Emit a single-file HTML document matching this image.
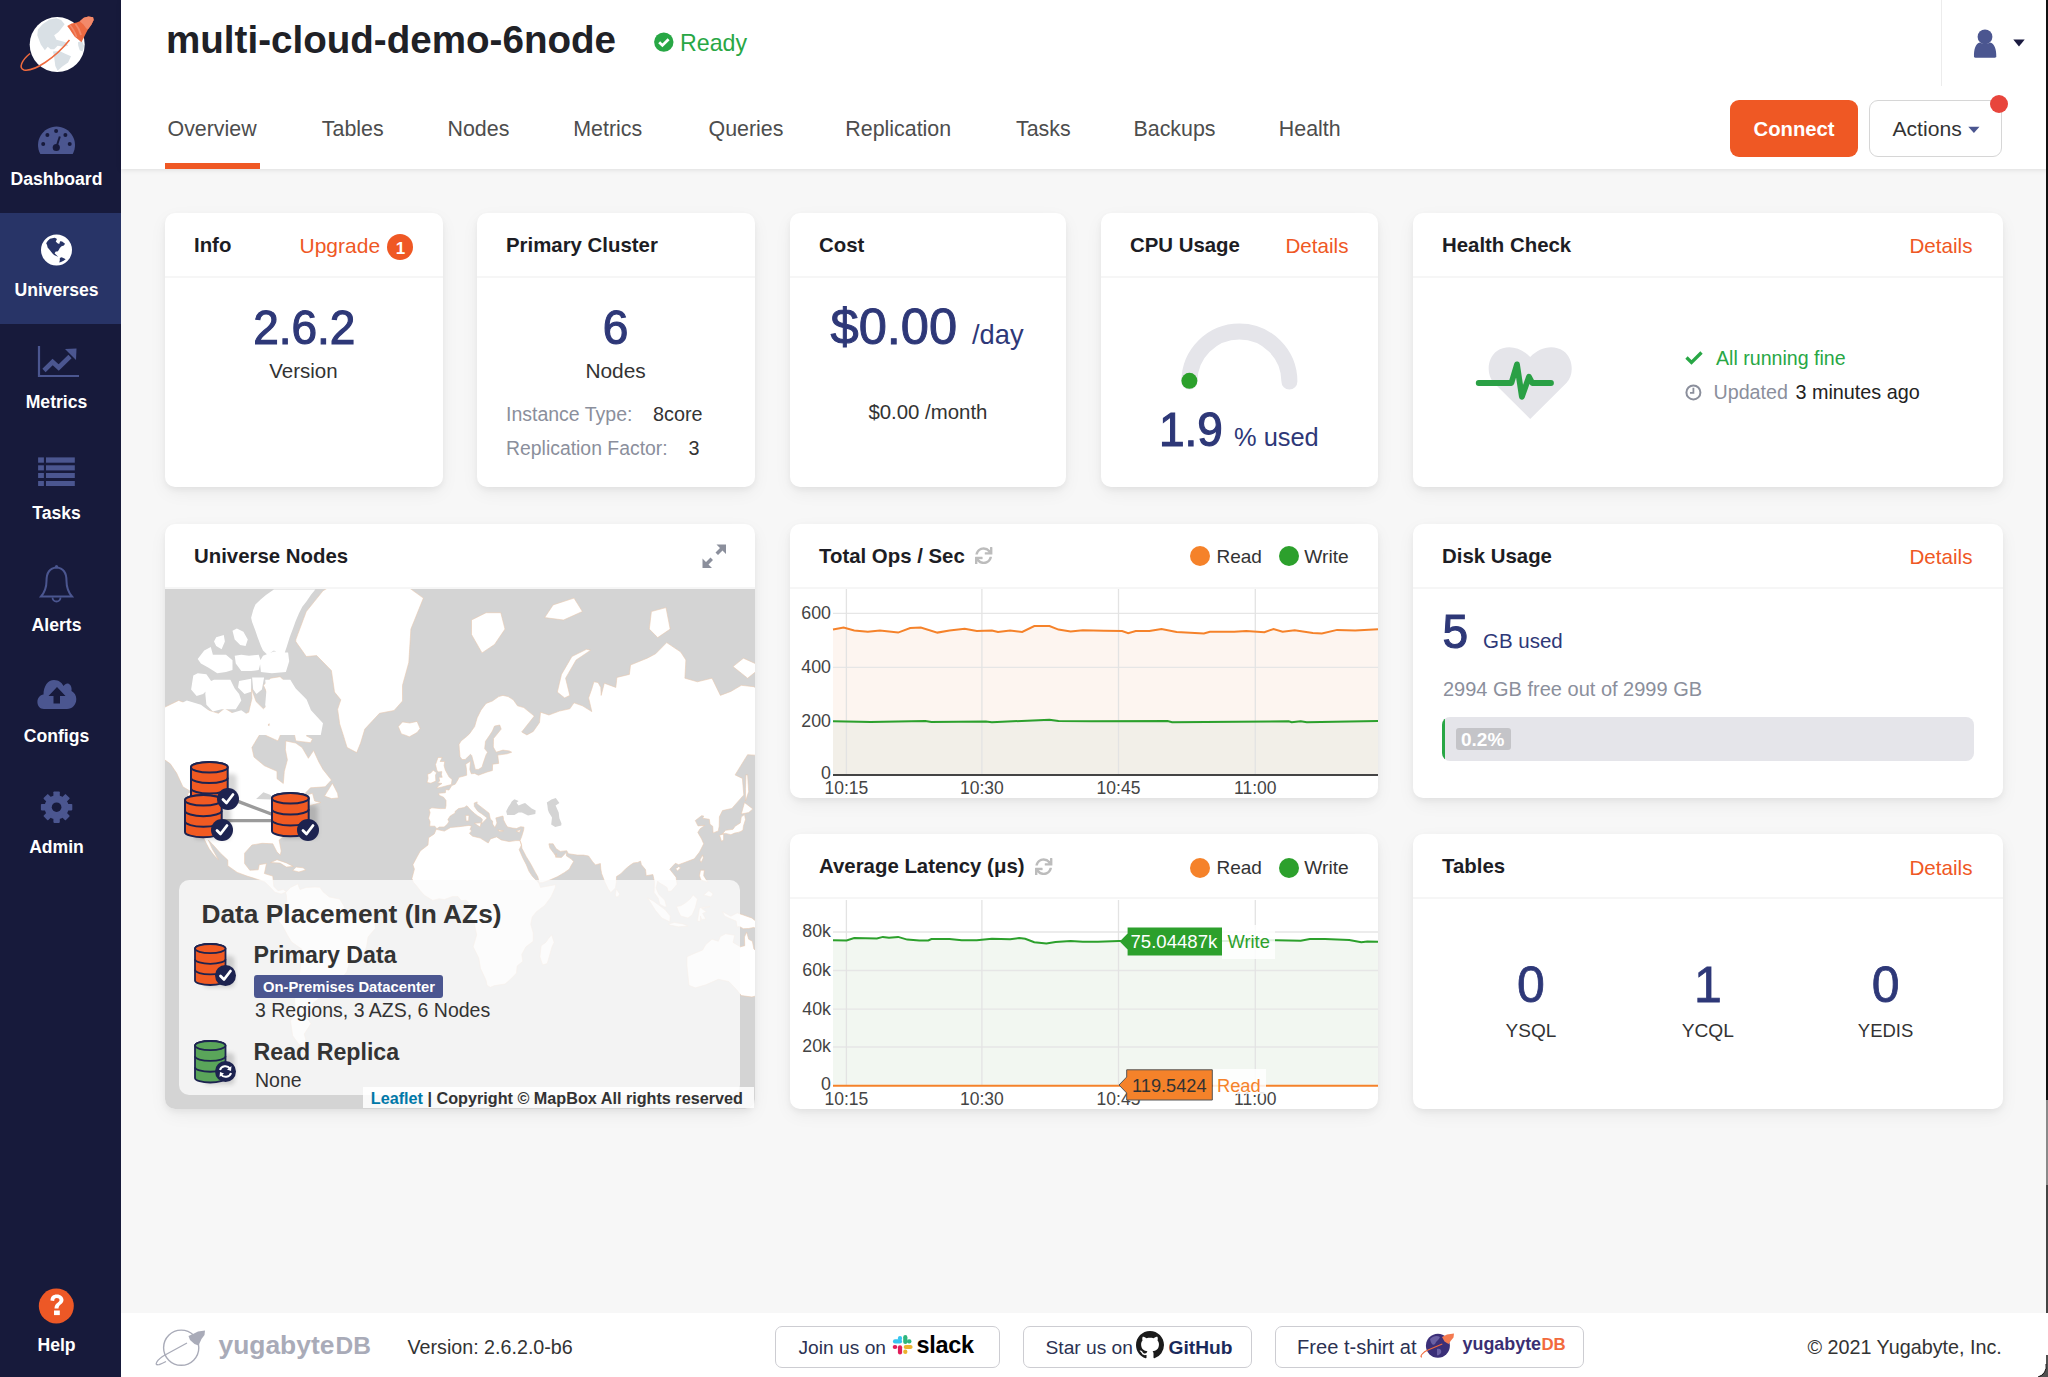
<!DOCTYPE html>
<html><head><meta charset="utf-8">
<style>
*{box-sizing:border-box;margin:0;padding:0}
html,body{width:2048px;height:1377px;overflow:hidden;background:#f7f7f7;font-family:"Liberation Sans",sans-serif;color:#333}
.abs{position:absolute}
.t{position:absolute;line-height:1;white-space:nowrap}
#side{position:absolute;left:0;top:0;width:121px;height:1377px;background:#171a3b}
.nav{position:absolute;left:0;width:121px;height:112px;text-align:center;color:#fff}
.nav.act{background:#283467}
.lbl{font-size:17.6px;line-height:17.6px;font-weight:bold;color:#fff;white-space:nowrap;text-align:center}
#hdr{position:absolute;left:121px;top:0;width:1927px;height:169px;background:#fff;box-shadow:0 1px 5px rgba(0,0,0,0.1)}
.tab{position:absolute;top:115px;font-size:21.4px;color:#4a4a4a;white-space:nowrap}
.card{position:absolute;background:#fff;border-radius:10px;box-shadow:0 3px 6px rgba(0,0,0,0.05),0 6px 18px rgba(0,0,0,0.05);overflow:hidden}
.card .hd{position:absolute;left:0;right:0;top:0;height:65px;border-bottom:2px solid #f6f6f6}
.card .tt{position:absolute;left:29px;top:21px;font-size:20.4px;font-weight:bold;color:#1d1d24;white-space:nowrap}
.card .lk{position:absolute;top:22px;font-size:21px;color:#ef5824;white-space:nowrap}
.big{color:#2e3878}
#foot{position:absolute;left:121px;top:1313px;width:1927px;height:64px;background:#fff}
.fbtn{position:absolute;top:13px;height:41px;border:1.5px solid #d3d3d3;border-radius:6px;background:#fff;font-size:20px;color:#2e3454;white-space:nowrap}
</style></head><body>
<div id="side">
<svg class="abs" style="left:0;top:0" width="121" height="1377" viewBox="0 0 121 1377">
 <!-- logo -->
 <circle cx="57.2" cy="44.6" r="27.5" fill="#fff"/>
 <path d="M37.31 35.21 L37.89 29.40 L42.54 24.17 L49.51 19.53 L56.48 18.36 L61.13 20.11 L64.62 24.17 L60.55 29.40 L58.23 32.31 L54.16 35.21 L56.48 39.86 L61.13 41.03 L65.78 42.19 L68.11 45.67 L63.46 46.84 L57.65 45.67 L54.16 49.16 L50.67 49.16 L47.77 46.84 L44.86 50.32 L40.80 44.51Z M53.00 51.48 L59.39 50.90 L65.20 53.81 L71.01 56.13 L68.11 62.52 L62.30 66.59 L57.65 70.66 L55.32 66.01 L54.16 57.30Z M77.98 42.19 L82.05 41.03 L84.08 45.67 L82.63 51.48 L79.73 50.32 L78.27 45.67Z" fill="#d9e0e5"/>
 <path d="M30 53.5 C22 60 18 68 24 70 C34 72 55 58 69.5 40" fill="none" stroke="#ee6a3e" stroke-width="1.5"/>
 <path d="M67.23 25.92 L71.59 23.59 L76.82 22.43 L79.73 21.27 L83.79 17.78 L88.44 16.62 L93.09 17.20 L93.67 20.11 L91.35 24.76 L87.86 29.40 L85.54 34.05 L83.79 37.54 L81.47 42.19 L78.56 39.86 L74.50 36.38 L71.59 32.31 L69.85 29.40Z" fill="#ec6a42"/>
 <path d="M79.73 21.27 L83.79 17.78 L88.44 16.62 L93.09 17.20 L93.67 20.11 L91.35 24.76 L87.86 29.40 L86.12 28.24 L83.21 24.17Z" fill="#f2896a"/>
 <path d="M75.5 24 C78 27 80 31 81 35" stroke="#f2896a" stroke-width="1.8" fill="none"/>
 <path d="M70 25 C73 29 75.5 33 76.5 37" stroke="#f2896a" stroke-width="1.6" fill="none"/>
 <!-- dashboard gauge -->
 <path d="M40.3 154 A18.5 18.5 0 1 1 72.7 154 Z" fill="#4b5690"/>
 <g fill="#171a3b"><circle cx="47.4" cy="134.9" r="2"/><circle cx="56.1" cy="131" r="2"/><circle cx="65.4" cy="134.9" r="2"/><circle cx="43.2" cy="143.9" r="2"/><circle cx="69.7" cy="143.9" r="2"/><circle cx="56.3" cy="147.5" r="3.6"/></g>
 <path d="M56.3 147.5 L59.8 136.5" stroke="#171a3b" stroke-width="2"/>
 <!-- universes globe -->
 <rect x="0" y="213" width="121" height="111" fill="#283467"/>
 <circle cx="56.5" cy="250" r="15.5" fill="#fff"/>
 <path d="M46.17 243.36 L47.62 241.04 L49.94 238.71 L52.26 238.13 L54.59 237.84 L56.33 238.42 L56.91 239.29 L55.75 241.62 L57.49 243.36 L59.24 243.94 L60.11 241.33 L62.14 241.62 L65.04 243.65 L63.88 245.39 L61.56 246.26 L59.82 248.01 L58.65 250.33 L57.49 251.49 L55.75 251.49 L54.59 253.24 L56.33 254.98 L58.36 257.01 L56.91 256.29 L54.01 254.98 L52.26 253.24 L49.94 250.33 L47.62 247.43 L47.04 245.10Z M59.82 257.88 L61.56 257.30 L63.88 258.17 L65.63 259.33 L63.59 260.79 L60.98 261.95 L59.24 262.53 L59.82 260.21Z" fill="#283467"/>
 <!-- metrics -->
 <path d="M39 346 V376 H79" fill="none" stroke="#4b5690" stroke-width="2.2"/>
 <path d="M44 370.5 L52.6 362 L58.7 367.5 L70 356.5" fill="none" stroke="#4b5690" stroke-width="4.6"/>
 <path d="M65 349 L76.5 348.5 L76 360 Z" fill="#4b5690"/>
 <!-- tasks -->
 <g fill="#4b5690">
 <rect x="38.1" y="457.4" width="5.8" height="5.3"/><rect x="46" y="457.4" width="28.8" height="5.3"/>
 <rect x="38.1" y="465.3" width="5.8" height="5.1"/><rect x="46" y="465.3" width="28.8" height="5.1"/>
 <rect x="38.1" y="473" width="5.8" height="5"/><rect x="46" y="473" width="28.8" height="5"/>
 <rect x="38.1" y="481" width="5.8" height="5"/><rect x="46" y="481" width="28.8" height="5"/>
 </g>
 <!-- alerts bell -->
 <path d="M56.5 567.5 C49 568 46.5 574 46.5 581 C46.5 588 44 593 41 596.5 L72 596.5 C69 593 66.5 588 66.5 581 C66.5 574 64 568 56.5 567.5Z" fill="none" stroke="#4b5690" stroke-width="2"/>
 <circle cx="56.5" cy="566.5" r="1.6" fill="#4b5690"/>
 <path d="M52.5 597.5 A4 4 0 0 0 60.5 597.5" fill="none" stroke="#4b5690" stroke-width="1.8"/>
 <!-- configs cloud -->
 <path d="M44 709 C39.5 709 37.4 705.5 37.4 702 C37.4 698 40 695 43.5 694.5 C43.5 686 48 680 54 680 C59 680 62 683 63.5 686 C65 684 67 683 69 684 C71 685 72 688 71.5 691 C74.5 692.5 76.3 695.5 76.3 699 C76.3 705 72 709 67 709 Z" fill="#4b5690"/>
 <path d="M57 687 L48.5 696 L53.5 696 L53.5 703.5 L60 703.5 L60 696 L65.5 696 Z" fill="#171a3b"/>
 <!-- admin gear -->
 <g transform="translate(56.6 807.2)" fill="#4b5690">
  <circle r="12"/>
  <g id="tooth"><rect x="-3.2" y="-15.7" width="6.4" height="6" rx="0.8"/></g>
  <use href="#tooth" transform="rotate(45)"/><use href="#tooth" transform="rotate(90)"/><use href="#tooth" transform="rotate(135)"/>
  <use href="#tooth" transform="rotate(180)"/><use href="#tooth" transform="rotate(225)"/><use href="#tooth" transform="rotate(270)"/><use href="#tooth" transform="rotate(315)"/>
  <circle r="4.8" fill="#171a3b"/>
 </g>
 <!-- help -->
 <circle cx="56.3" cy="1306" r="17.5" fill="#ed5826"/>
 <path d="M50.5 1300.5 C50.5 1296.5 53 1294.5 56.8 1294.5 C61 1294.5 63.5 1297 63.5 1300 C63.5 1304 58.5 1304.5 58.5 1308.5 L54.5 1308.5 C54.5 1303 59.5 1302.5 59.5 1300.2 C59.5 1298.8 58.5 1298 56.8 1298 C55 1298 54.2 1299.2 54.2 1301 Z" fill="#fff"/>
 <rect x="54" y="1310.5" width="5.8" height="4.6" fill="#fff"/>
</svg>
<div class="abs lbl" style="left:0;width:113px;top:171px">Dashboard</div>
<div class="abs lbl" style="left:0;width:113px;top:282px">Universes</div>
<div class="abs lbl" style="left:0;width:113px;top:394px">Metrics</div>
<div class="abs lbl" style="left:0;width:113px;top:505px">Tasks</div>
<div class="abs lbl" style="left:0;width:113px;top:617px">Alerts</div>
<div class="abs lbl" style="left:0;width:113px;top:728px">Configs</div>
<div class="abs lbl" style="left:0;width:113px;top:839px">Admin</div>
<div class="abs lbl" style="left:0;width:113px;top:1337px">Help</div>
</div>
<div id="hdr">
</div>
<div class="t" style="left:166px;top:21px;font-size:38.6px;font-weight:bold;color:#202126;">multi-cloud-demo-6node</div>
<svg class="abs" style="left:654px;top:32px" width="20" height="20" viewBox="0 0 20 20"><circle cx="9.8" cy="10.1" r="9.7" fill="#28a745"/><path d="M5.2 10.3 L8.4 13.4 L14.6 7.2" fill="none" stroke="#fff" stroke-width="2.8"/></svg>
<div class="t" style="left:680px;top:32px;font-size:23.2px;color:#28a745;">Ready</div>
<div class="t" style="left:167.5px;top:119px;font-size:21.4px;color:#4d4d4d;">Overview</div>
<div class="t" style="left:321.8px;top:119px;font-size:21.4px;color:#4d4d4d;">Tables</div>
<div class="t" style="left:447.5px;top:119px;font-size:21.4px;color:#4d4d4d;">Nodes</div>
<div class="t" style="left:573.3px;top:119px;font-size:21.4px;color:#4d4d4d;">Metrics</div>
<div class="t" style="left:708.5px;top:119px;font-size:21.4px;color:#4d4d4d;">Queries</div>
<div class="t" style="left:845.3px;top:119px;font-size:21.4px;color:#4d4d4d;">Replication</div>
<div class="t" style="left:1016px;top:119px;font-size:21.4px;color:#4d4d4d;">Tasks</div>
<div class="t" style="left:1133.5px;top:119px;font-size:21.4px;color:#4d4d4d;">Backups</div>
<div class="t" style="left:1278.8px;top:119px;font-size:21.4px;color:#4d4d4d;">Health</div>
<div class="abs" style="left:165px;top:163px;width:95px;height:6px;background:#ef5824"></div>
<div class="abs" style="left:1730px;top:100px;width:128px;height:57px;background:#ef5824;border-radius:9px"></div>
<div class="t" style="left:1753.5px;top:119px;font-size:20.3px;font-weight:bold;color:#fff;">Connect</div>
<div class="abs" style="left:1869px;top:100px;width:133px;height:57px;background:#fff;border:1.5px solid #d6d6d6;border-radius:9px"></div>
<div class="t" style="left:1892.5px;top:118px;font-size:21.1px;color:#333;">Actions</div>
<svg class="abs" style="left:1968px;top:126px" width="12" height="8" viewBox="0 0 12 8"><path d="M0.3 0.7 L11.5 0.7 L5.9 7 Z" fill="#4b5690"/></svg>
<div class="abs" style="left:1989.6px;top:95.2px;width:18px;height:18px;border-radius:50%;background:#e8453c"></div>
<div class="abs" style="left:1941px;top:0;width:1px;height:86px;background:#ececec"></div>
<svg class="abs" style="left:1970px;top:26px" width="60" height="34" viewBox="0 0 60 34"><circle cx="15" cy="10.8" r="7.4" fill="#4b5690"/><path d="M4 31 C3.8 23 5.5 17.5 10 16.5 C12 18.3 18 18.3 20 16.5 C24.5 17.5 26.5 23 26.3 31 C26 31.5 25 31.8 24 31.8 L6.5 31.8 C5 31.8 4.2 31.5 4 31Z" fill="#4b5690"/><path d="M43.3 13.5 L54.7 13.5 L49 20.4 Z" fill="#1b1b40"/></svg>
<div class="abs" style="left:2046px;top:0;width:2px;height:1100px;background:#111"></div><div class="abs" style="left:2046px;top:1100px;width:2px;height:85px;background:#8a8a8a"></div><div class="abs" style="left:2046px;top:1185px;width:2px;height:192px;background:#444"></div>
<div id="foot">
</div>
<!-- cards -->
<div class="card" style="left:165px;top:213px;width:278px;height:274px"><div class="hd"><div class="tt">Info</div></div></div>
<div class="card" style="left:477px;top:213px;width:278px;height:274px"><div class="hd"><div class="tt">Primary Cluster</div></div></div>
<div class="card" style="left:790px;top:213px;width:276px;height:274px"><div class="hd"><div class="tt">Cost</div></div></div>
<div class="card" style="left:1101px;top:213px;width:277px;height:274px"><div class="hd"><div class="tt">CPU Usage</div></div></div>
<div class="card" style="left:1413px;top:213px;width:590px;height:274px"><div class="hd"><div class="tt">Health Check</div></div></div>
<div class="card" style="left:165px;top:524px;width:590px;height:585px"><div class="hd"><div class="tt">Universe Nodes</div></div><svg class="abs" style="left:0;top:65px" width="590" height="520" viewBox="165 589 590 520"><rect x="165" y="589" width="590" height="520" fill="#d4d4d4"/><path d="M97.1 726.1 L101.3 708.2 L120.5 693.4 L130.6 696.6 L153.6 704.0 L164.0 707.6 L178.7 700.4 L189.1 704.6 L203.8 708.8 L218.4 713.3 L224.7 708.2 L233.1 713.3 L243.5 714.4 L248.7 712.2 L251.9 698.5 L251.5 688.8 L256.1 701.6 L263.4 708.8 L269.7 702.8 L272.8 705.8 L278.4 711.1 L277.0 721.4 L269.7 723.0 L267.6 730.0 L259.2 735.3 L251.9 747.5 L254.0 757.1 L264.4 765.7 L277.0 771.3 L277.0 778.7 L283.3 783.5 L284.3 771.3 L287.4 759.9 L285.4 749.7 L285.8 740.9 L295.8 743.1 L302.1 747.5 L308.4 758.3 L313.6 750.5 L318.8 761.9 L323.0 769.4 L331.4 780.1 L325.1 786.8 L310.5 787.8 L302.1 796.4 L312.5 793.3 L314.6 801.0 L320.9 802.5 L310.5 805.4 L302.1 808.4 L302.1 813.5 L293.7 816.8 L289.5 826.2 L290.6 830.9 L279.1 840.1 L281.2 850.9 L280.3 855.1 L277.0 852.1 L272.8 843.8 L262.3 843.3 L251.9 845.0 L244.6 853.2 L244.6 863.5 L249.8 870.2 L258.2 869.8 L259.2 864.7 L266.5 863.5 L264.4 873.5 L272.8 876.1 L273.8 886.4 L278.0 890.7 L283.3 889.6 L286.4 891.8 L281.2 893.9 L274.9 892.2 L268.6 885.4 L264.4 881.7 L256.1 878.9 L247.7 876.3 L237.2 872.4 L227.8 865.8 L227.8 860.1 L220.5 853.2 L213.2 845.0 L208.4 840.1 L212.1 848.6 L218.4 859.7 L214.2 855.6 L209.0 848.6 L205.9 842.6 L203.4 837.2 L196.2 832.6 L192.3 824.9 L189.1 816.8 L188.1 809.8 L189.1 799.5 L187.7 793.6 L191.2 791.7 L182.9 786.8 L176.6 773.1 L170.3 763.8 L161.9 757.9 L155.7 753.0 L143.1 749.7 L134.8 754.3 L126.4 761.9 L118.0 765.7 L105.5 772.4 L118.0 757.9 L109.6 752.2 L103.4 748.4 L104.4 737.7 L111.7 731.5 L101.3 731.0Z M295.8 639.6 L306.3 611.5 L323.0 590.8 L364.8 565.8 L402.5 583.0 L423.4 598.1 L410.9 629.1 L408.8 662.5 L402.5 685.3 L402.5 701.0 L394.1 710.5 L379.5 713.3 L364.8 729.1 L360.6 743.1 L356.7 752.6 L347.1 747.5 L342.9 733.9 L339.7 724.0 L337.6 709.3 L340.8 699.8 L334.5 692.1 L331.4 670.6 L316.7 655.6 L306.3 656.5 L295.8 641.6Z M436.8 828.8 L434.9 826.2 L429.7 826.2 L430.1 821.7 L428.6 818.2 L430.1 812.6 L429.0 809.5 L431.8 807.8 L440.1 808.6 L445.4 808.6 L446.0 805.4 L446.0 800.4 L443.7 797.3 L439.1 795.2 L438.7 793.3 L445.4 792.7 L445.8 789.4 L448.9 790.1 L451.8 785.5 L455.2 784.2 L457.9 779.8 L459.0 777.3 L463.1 776.3 L466.7 775.2 L466.5 769.4 L465.7 764.2 L470.5 761.1 L469.8 769.4 L471.3 773.8 L474.6 773.4 L478.4 775.2 L487.2 772.0 L492.4 770.5 L492.6 764.2 L498.7 763.4 L497.7 755.1 L507.1 753.8 L511.7 752.2 L509.2 750.9 L502.9 750.1 L496.2 752.2 L493.3 747.1 L493.5 738.6 L501.2 729.1 L499.7 725.0 L494.5 726.1 L492.4 731.0 L489.3 735.8 L485.5 741.3 L484.7 748.8 L487.6 752.2 L486.1 754.7 L483.0 763.8 L482.0 767.2 L478.4 769.4 L475.3 769.4 L474.6 766.5 L473.2 761.1 L471.7 755.5 L470.5 754.3 L468.4 756.3 L465.2 759.5 L462.1 759.5 L460.0 756.7 L459.4 750.1 L459.0 744.5 L461.1 740.9 L466.3 736.8 L469.4 733.9 L474.6 726.6 L477.2 717.7 L481.1 709.9 L486.1 703.4 L492.4 701.0 L498.7 696.6 L502.9 695.4 L508.1 696.6 L513.3 699.8 L517.5 705.8 L523.8 707.6 L534.3 716.1 L528.0 724.0 L521.7 732.0 L526.9 734.9 L533.2 731.5 L539.5 722.5 L540.5 712.2 L548.9 715.0 L559.4 711.1 L569.8 708.8 L574.0 702.8 L582.4 705.8 L591.8 711.6 L588.6 697.9 L591.8 688.8 L593.9 681.8 L598.1 682.5 L600.8 687.4 L601.2 695.4 L604.3 683.2 L615.8 687.4 L616.9 677.4 L629.4 674.4 L630.5 665.0 L647.2 658.2 L655.6 653.8 L666.7 642.6 L680.7 652.0 L685.9 660.0 L684.9 678.2 L697.4 681.8 L712.0 678.2 L720.4 695.4 L730.9 691.4 L741.3 685.3 L753.9 686.7 L762.2 692.1 L783.2 698.5 L825.0 713.3 L825.0 743.1 L793.6 751.8 L789.4 767.6 L774.8 785.2 L773.8 763.8 L766.4 755.9 L747.6 754.7 L735.1 774.9 L742.4 778.4 L743.8 794.9 L731.9 808.4 L722.5 810.6 L719.4 816.8 L719.2 826.2 L718.3 830.9 L713.1 832.9 L712.7 826.2 L710.0 824.3 L709.3 819.3 L702.6 818.2 L703.7 816.0 L701.6 815.7 L695.3 820.6 L698.0 825.9 L704.7 825.4 L700.1 828.8 L697.8 832.4 L701.6 838.9 L703.7 843.8 L699.5 852.1 L694.3 858.8 L685.9 862.0 L678.6 864.7 L675.4 863.3 L671.3 867.6 L669.8 869.3 L676.1 877.2 L677.1 884.3 L671.3 891.1 L668.1 891.5 L667.1 887.5 L663.9 885.4 L659.3 882.8 L657.7 881.1 L656.0 887.9 L658.7 894.3 L664.8 900.2 L666.5 906.7 L664.8 906.9 L659.8 904.2 L658.3 898.3 L654.1 892.4 L654.5 882.2 L652.9 874.6 L646.2 875.7 L645.5 869.6 L641.4 864.7 L640.5 861.1 L637.8 862.4 L633.6 862.9 L630.3 865.1 L626.3 868.2 L620.6 873.9 L616.5 876.6 L616.3 882.2 L615.4 887.9 L610.8 892.6 L608.1 888.8 L605.0 882.4 L601.6 873.5 L600.8 869.1 L600.4 863.5 L595.5 864.9 L592.6 861.7 L588.6 856.0 L583.4 855.1 L577.3 855.1 L568.4 853.7 L566.7 850.7 L560.4 851.4 L556.2 848.8 L553.1 843.8 L548.9 843.8 L549.9 848.1 L553.5 852.8 L556.2 856.7 L556.4 853.5 L555.6 857.2 L561.5 857.4 L566.3 852.3 L566.5 856.0 L571.1 858.8 L573.6 861.5 L570.9 866.0 L569.4 869.1 L564.6 872.4 L557.7 876.6 L549.9 880.0 L542.6 882.6 L539.3 882.8 L537.8 876.8 L535.3 872.4 L530.5 863.5 L526.3 856.7 L521.9 848.3 L521.5 845.0 L520.0 840.6 L521.7 836.4 L523.6 830.1 L524.0 827.2 L520.7 826.7 L516.5 828.5 L512.3 828.0 L507.5 827.0 L505.6 824.1 L503.5 819.8 L503.3 817.3 L502.9 816.0 L498.1 817.3 L495.8 817.9 L497.0 823.0 L494.9 827.5 L492.6 824.1 L492.6 821.1 L490.3 819.0 L489.1 813.2 L483.0 808.4 L476.9 803.7 L477.2 801.9 L474.2 803.1 L474.4 806.6 L477.8 811.2 L482.0 814.0 L487.2 817.9 L483.2 822.2 L481.3 823.8 L482.4 819.5 L481.1 817.9 L477.8 816.0 L474.6 813.5 L470.5 809.8 L466.9 805.7 L464.2 807.5 L458.5 808.6 L455.0 811.5 L455.2 812.9 L450.2 816.0 L447.9 819.5 L448.9 821.7 L447.0 824.6 L444.1 827.0 L439.3 827.0Z M286.4 891.8 L290.6 887.5 L297.9 883.9 L298.9 886.9 L300.0 889.6 L306.3 887.5 L314.6 887.1 L319.9 887.3 L323.0 891.8 L329.3 897.0 L339.7 899.1 L343.9 905.8 L345.0 909.6 L350.2 911.3 L356.5 914.8 L365.9 915.9 L374.9 921.1 L375.3 928.5 L368.0 937.0 L366.5 946.8 L363.8 954.5 L360.6 959.1 L355.4 959.7 L349.1 963.6 L346.8 971.8 L341.8 977.9 L336.6 985.3 L331.4 987.8 L328.2 991.7 L328.2 997.0 L318.8 998.3 L312.5 1003.8 L313.6 1008.0 L307.3 1018.2 L310.9 1023.7 L304.2 1034.0 L305.6 1039.1 L306.3 1047.9 L298.9 1044.3 L292.7 1035.7 L290.6 1021.3 L294.8 1009.4 L294.8 993.0 L298.9 977.9 L301.0 963.6 L301.7 949.0 L291.6 942.0 L287.4 934.9 L282.2 925.3 L278.7 921.1 L280.1 915.9 L280.1 910.6 L284.3 906.5 L286.8 901.2 L286.4 894.9 L285.4 892.2Z M436.2 829.3 L444.3 831.1 L450.6 827.5 L459.0 826.7 L469.0 825.4 L471.5 826.2 L470.0 829.3 L471.5 830.9 L469.4 833.4 L472.6 836.2 L480.3 838.1 L488.2 843.0 L490.5 838.9 L496.6 836.9 L501.2 839.9 L509.2 841.6 L515.9 840.6 L520.0 840.6 L521.5 845.0 L519.2 849.7 L522.8 857.9 L526.3 864.7 L529.0 871.3 L532.2 876.1 L538.9 883.2 L540.5 887.5 L555.6 884.7 L555.2 887.7 L551.0 897.0 L544.7 905.4 L536.4 911.7 L532.2 916.9 L530.7 924.3 L533.2 932.8 L533.2 941.3 L525.9 946.8 L521.7 954.5 L522.8 961.3 L517.1 966.0 L516.5 973.0 L511.2 978.6 L505.0 984.0 L494.5 985.6 L490.3 987.3 L487.0 985.3 L486.1 980.3 L480.5 968.3 L478.8 957.9 L473.2 946.8 L476.7 934.9 L474.2 922.2 L467.3 911.7 L468.4 902.3 L466.3 900.2 L461.1 900.6 L457.9 896.4 L452.7 896.4 L444.3 899.5 L439.1 898.7 L432.8 900.4 L424.4 895.3 L420.3 890.7 L417.1 886.4 L413.4 882.2 L411.9 878.5 L414.4 869.1 L412.9 864.7 L417.1 856.7 L420.3 850.9 L428.0 845.0 L428.6 837.7 L434.3 833.9Z M436.6 788.2 L441.2 787.2 L451.4 784.5 L452.1 779.4 L449.1 777.0 L445.4 770.2 L444.1 765.7 L444.7 761.5 L440.1 761.5 L442.2 757.5 L438.0 757.5 L435.5 764.6 L436.8 770.2 L438.3 772.0 L441.8 771.6 L441.4 774.5 L442.2 777.3 L438.9 777.3 L439.7 781.1 L437.6 782.8 L442.0 783.5 L438.9 785.5Z M435.9 781.1 L435.5 775.2 L436.6 772.7 L433.2 770.2 L430.7 773.1 L427.6 774.2 L428.0 778.4 L427.0 782.5 L430.9 783.2Z M401.4 733.9 L398.3 726.6 L402.5 721.9 L409.8 723.0 L417.1 721.4 L420.1 728.6 L417.1 732.5 L409.4 736.8 L404.6 734.9Z M471.5 634.5 L482.0 652.9 L494.5 644.5 L505.0 629.1 L500.8 612.7 L486.1 612.7 L471.5 620.0Z M557.3 692.1 L564.6 697.9 L569.8 695.4 L565.6 678.2 L576.1 660.0 L590.7 650.2 L586.5 649.3 L571.9 656.5 L561.5 674.4 L559.4 683.2Z M544.7 617.6 L563.5 620.0 L582.4 611.5 L574.0 598.1 L553.1 604.9Z M649.3 629.1 L657.7 637.6 L670.2 629.1 L666.0 607.6 L651.4 611.5Z M733.0 666.6 L747.6 678.2 L762.2 666.6 L743.4 658.2Z M551.6 934.9 L554.1 942.4 L552.0 946.8 L547.2 963.6 L542.6 964.8 L539.9 956.8 L541.2 945.7 L545.8 942.4 L548.9 938.1Z M615.4 894.9 L616.3 889.0 L619.6 893.9 L618.3 896.6 L616.0 897.0Z M722.3 833.9 L725.6 830.3 L733.0 829.3 L735.1 826.2 L740.3 823.0 L741.3 816.8 L744.5 814.6 L745.5 819.5 L743.4 826.2 L743.0 830.1 L740.9 831.4 L738.2 832.4 L734.6 833.1 L730.9 834.7 L725.6 833.4Z M741.3 814.0 L744.5 802.5 L752.8 808.9 L748.7 812.6Z M719.6 835.2 L723.6 833.9 L723.6 840.1 L721.5 841.3Z M745.5 801.0 L748.7 791.7 L747.6 774.9 L745.9 774.9 L745.5 788.5Z M699.9 860.1 L702.6 854.9 L703.3 857.9 L701.2 862.4Z M675.7 868.7 L678.6 866.7 L680.7 867.8 L677.5 870.9Z M699.5 875.7 L700.5 870.2 L704.3 870.2 L703.7 875.7 L707.9 882.2 L700.8 880.0Z M703.7 894.9 L708.9 890.7 L713.1 893.9 L711.0 897.0Z M647.6 897.9 L653.5 901.2 L665.0 909.6 L670.2 915.9 L669.8 921.8 L661.9 918.0 L655.6 910.6 L652.4 905.4Z M668.5 923.9 L674.4 922.6 L682.8 923.9 L688.0 926.0 L678.6 926.8 L670.2 925.1Z M676.5 906.5 L678.6 911.7 L680.7 915.9 L688.0 918.0 L692.2 914.8 L695.3 907.5 L697.4 899.1 L693.2 894.9 L690.1 899.1 L684.9 903.3 L680.7 905.8Z M697.4 921.1 L699.5 907.9 L710.0 906.5 L701.6 908.6 L706.4 911.7 L702.6 913.4 L705.8 919.0 L701.6 919.4 L700.5 915.9 L700.3 921.3Z M722.5 911.7 L730.9 916.3 L737.2 912.9 L743.4 915.0 L751.8 918.0 L757.0 922.2 L756.0 926.4 L762.2 931.7 L753.9 927.4 L748.7 928.5 L743.4 928.7 L739.2 926.4 L737.2 927.0 L736.1 921.1 L728.8 918.0 L724.6 915.9Z M687.0 956.8 L687.0 966.0 L689.0 985.3 L695.3 987.8 L705.8 984.8 L718.3 979.3 L728.8 981.5 L736.1 989.1 L741.3 995.6 L751.8 997.0 L762.2 994.3 L769.6 970.6 L768.5 963.6 L760.2 954.5 L753.9 949.0 L752.4 941.3 L748.7 939.2 L746.6 932.1 L744.5 937.0 L744.7 945.7 L740.3 946.8 L733.0 942.4 L734.6 935.3 L725.6 933.8 L720.4 936.6 L718.3 941.3 L712.0 939.2 L705.8 944.6 L702.6 950.1 L693.2 953.9Z M270.7 862.6 L277.0 859.7 L286.4 862.9 L293.3 866.4 L286.4 867.1 L280.1 863.1Z M292.7 870.4 L296.2 867.1 L303.1 867.8 L305.6 870.0 L298.9 872.0Z M324.5 796.1 L332.4 783.2 L337.6 793.3 L338.3 797.9 L331.4 798.6Z M474.4 823.3 L481.1 822.8 L480.1 827.0Z M465.7 815.4 L469.0 815.4 L468.6 820.9 L466.1 820.9Z M497.7 829.8 L503.5 830.9 L499.7 831.6Z M516.1 831.1 L520.9 829.6 L519.4 832.4Z M319.0 719.3 L310.5 712.2 L305.2 700.4 L297.9 694.1 L288.5 684.6 L280.1 676.7 L270.7 678.2 L263.4 685.3 L269.7 698.5 L278.0 702.8 L274.9 710.5 L280.1 716.1 L285.4 729.1 L293.7 731.0 L295.8 740.9 L310.5 742.7 L312.5 739.1 L306.3 735.8 L313.6 731.0Z M281.2 733.0 L268.6 724.0 L265.5 735.3 L278.0 740.9Z" fill="#fff" stroke="#e9c9b0" stroke-width="0.6" fill-rule="nonzero"/><path d="M260.9 599.2 L266.3 594.8 L273.9 589.4 L285.9 589.4 L300.1 589.4 L315.3 589.4 L311.0 594.8 L306.6 601.3 L302.3 606.8 L299.0 613.3 L295.7 620.9 L293.0 628.6 L289.7 637.3 L287.0 646.0 L284.8 652.5 L280.5 653.6 L273.9 650.4 L267.4 654.7 L263.0 650.4 L260.9 646.0 L257.6 637.3 L255.4 630.8 L252.1 622.0 L251.1 617.7 L253.2 610.1 L255.4 604.6Z M232.5 630.8 L236.9 628.6 L243.4 631.8 L247.8 639.5 L245.6 646.0 L240.2 644.9 L234.7 639.5Z M216.2 637.3 L223.8 635.1 L224.9 641.6 L221.6 649.3 L216.2 646.0 L214.0 641.6Z M197.7 659.1 L204.2 650.4 L210.8 647.1 L212.9 654.7 L221.6 654.7 L226.0 654.7 L232.5 660.2 L232.5 670.0 L226.0 672.1 L217.3 673.2 L208.6 667.8 L200.9 663.4Z M234.7 655.8 L241.3 654.7 L248.9 655.8 L258.7 654.7 L260.9 661.3 L258.7 670.0 L251.1 671.1 L241.3 671.1 L235.8 663.4Z M263.0 655.8 L273.9 651.4 L288.1 652.5 L289.2 661.3 L285.9 672.1 L271.8 673.2 L260.9 672.1 L259.8 661.3Z M191.1 689.6 L193.3 675.4 L197.7 673.2 L206.4 674.3 L211.8 681.9 L208.6 688.5 L203.1 693.9 L196.6 696.1Z M206.4 683.0 L214.0 679.8 L230.4 679.8 L234.7 688.5 L239.1 693.9 L241.3 700.5 L235.8 709.2 L221.6 709.2 L212.9 711.4 L206.4 704.8 L205.3 693.9Z M239.1 680.9 L251.1 678.7 L251.1 691.8 L244.5 693.9 L238.0 687.4Z M252.1 677.6 L264.1 677.6 L261.9 689.6 L256.5 693.9 L253.2 689.6Z M265.2 679.8 L290.3 679.8 L295.7 688.5 L301.2 693.9 L306.6 699.4 L311.0 710.3 L323.0 723.3 L320.8 735.0 L273.9 735.0 L269.6 724.4 L265.2 704.8 L266.3 691.8Z M165.0 709.2 L175.9 705.9 L186.8 700.5 L200.9 704.8 L214.0 714.6 L230.4 713.5 L241.3 710.3 L252.1 717.9 L263.0 722.3 L269.6 726.6 L273.9 735.0 L165.0 735.0Z" fill="#fff"/><path d="M507.1 814.9 L509.2 814.9 L514.4 814.9 L518.6 812.6 L521.9 812.6 L528.0 815.4 L535.3 814.0 L535.7 810.6 L531.7 808.4 L526.9 804.6 L525.1 803.1 L522.8 803.7 L518.6 805.4 L516.5 802.8 L518.6 801.0 L514.4 799.2 L511.7 801.6 L510.4 804.0 L508.3 806.9 L506.2 811.2Z M546.8 802.5 L551.4 799.5 L555.8 797.9 L559.4 803.1 L555.6 805.4 L558.7 812.6 L559.4 818.2 L561.5 823.6 L561.2 825.4 L555.2 827.0 L551.2 824.6 L552.0 817.6 L548.9 812.6 L547.9 809.8 L547.4 805.4Z M256.1 798.9 L271.8 799.5 L270.7 794.9 L263.4 792.3Z" fill="#d4d4d4"/></svg></div>
<div class="card" style="left:790px;top:524px;width:588px;height:274px"><div class="hd"><div class="tt">Total Ops / Sec</div></div></div>
<div class="card" style="left:790px;top:834px;width:588px;height:275px"><div class="hd"><div class="tt">Average Latency (μs)</div></div></div>
<div class="card" style="left:1413px;top:524px;width:590px;height:274px"><div class="hd"><div class="tt">Disk Usage</div></div></div>
<div class="card" style="left:1413px;top:834px;width:590px;height:275px"><div class="hd"><div class="tt">Tables</div></div></div>
<div class="t" style="left:299.5px;top:235px;font-size:21.0px;color:#ef5824;">Upgrade</div>
<div class="abs" style="left:387.4px;top:234px;width:26px;height:26px;border-radius:50%;background:#ef5824"></div>
<div class="t" style="left:100.39999999999998px;width:600px;text-align:center;top:240px;font-size:17.0px;font-weight:bold;color:#fff;">1</div>
<div class="t" style="left:4.300000000000011px;width:600px;text-align:center;top:305px;font-size:46.0px;color:#2e3878;-webkit-text-stroke:1.1px #2e3878;transform:scaleY(1.05);transform-origin:0 39px;">2.6.2</div>
<div class="t" style="left:3.5px;width:600px;text-align:center;top:361px;font-size:20.5px;color:#333;">Version</div>
<div class="t" style="left:315.6px;width:600px;text-align:center;top:305px;font-size:46.0px;color:#2e3878;-webkit-text-stroke:1.1px #2e3878;transform:scaleY(1.05);transform-origin:0 39px;">6</div>
<div class="t" style="left:315.6px;width:600px;text-align:center;top:361px;font-size:20.9px;color:#333;">Nodes</div>
<div class="t" style="left:506px;top:405px;font-size:19.5px;color:#8b8f9c;">Instance Type:</div>
<div class="t" style="left:653px;top:405px;font-size:19.8px;color:#333;">8core</div>
<div class="t" style="left:506px;top:439px;font-size:19.4px;color:#8b8f9c;">Replication Factor:</div>
<div class="t" style="left:688.5px;top:439px;font-size:19.8px;color:#333;">3</div>
<div class="t" style="left:830.5px;top:302px;font-size:50.6px;color:#2e3878;-webkit-text-stroke:1px #2e3878;">$0.00</div>
<div class="t" style="left:972px;top:321px;font-size:27.3px;color:#2e3878;">/day</div>
<div class="t" style="left:627.9px;width:600px;text-align:center;top:402px;font-size:20.4px;color:#333;">$0.00 /month</div>
<div class="t" style="left:1285.5px;top:236px;font-size:20.6px;color:#ef5824;">Details</div>
<svg class="abs" style="left:1170px;top:313px" width="140" height="80" viewBox="1170 313 140 80"><path d="M1189.4 381.5 A50 50 0 0 1 1289.4 381.5" fill="none" stroke="#e5e5ea" stroke-width="16" stroke-linecap="round"/><circle cx="1189.4" cy="380.8" r="8" fill="#2ca02c"/></svg>
<div class="t" style="left:1159px;top:407px;font-size:46.0px;color:#2e3878;-webkit-text-stroke:1.1px #2e3878;transform:scaleY(1.035);transform-origin:0 39px;">1.9</div>
<div class="t" style="left:1234px;top:425px;font-size:25.4px;color:#2e3878;">% used</div>
<div class="t" style="left:1909.5px;top:236px;font-size:20.6px;color:#ef5824;">Details</div>
<svg class="abs" style="left:1470px;top:340px" width="110" height="85" viewBox="1470 340 110 85"><path d="M1530.2 419 L1494 383 C1486 375 1487 358 1497 351 C1507 344 1521 347 1530.2 357 C1539.4 347 1553.4 344 1563.4 351 C1573.4 358 1574.4 375 1566.4 383 Z" fill="#e5e5ea"/><path d="M1478.7 383 L1511.4 383 L1517 364.4 L1521.9 396.8 L1529 376.8 L1532.3 383 L1551 383" fill="none" stroke="#2aa045" stroke-width="5.8" stroke-linecap="round" stroke-linejoin="round"/></svg>
<svg class="abs" style="left:1684px;top:348px" width="22" height="60" viewBox="1684 348 22 60"><path d="M1686.5 357.5 L1691.5 362.5 L1701.5 352.5" fill="none" stroke="#28a745" stroke-width="3.3"/><circle cx="1693.4" cy="392.4" r="7" fill="none" stroke="#8b8f9c" stroke-width="2"/><path d="M1693.4 387.8 V392.8 H1690" fill="none" stroke="#8b8f9c" stroke-width="1.8"/></svg>
<div class="t" style="left:1716px;top:349px;font-size:19.6px;color:#28a745;">All running fine</div>
<div class="t" style="left:1713.5px;top:383px;font-size:19.7px;color:#8b8f9c;">Updated</div>
<div class="t" style="left:1795.5px;top:383px;font-size:19.8px;color:#222;">3 minutes ago</div>
<svg class="abs" style="left:790px;top:589px" width="588" height="210" viewBox="790 589 588 210"><path d="M833.0 629.6 L843.6 627.5 L854.2 630.5 L867.8 631.7 L879.9 630.5 L898.1 632.6 L910.2 628.1 L920.8 627.5 L937.4 632.6 L949.5 630.5 L964.7 628.7 L976.8 631.1 L991.9 630.5 L998.0 632.0 L1010.1 630.5 L1022.2 632.0 L1034.3 626.0 L1049.5 626.0 L1058.5 629.6 L1070.6 631.4 L1082.8 630.2 L1103.9 630.8 L1122.1 631.1 L1128.2 633.2 L1135.7 631.1 L1149.4 631.1 L1161.5 629.0 L1176.6 632.0 L1203.9 633.5 L1209.9 631.7 L1234.1 631.7 L1246.2 631.1 L1264.4 632.3 L1273.5 629.0 L1282.6 631.7 L1294.7 630.2 L1312.8 632.9 L1321.9 633.5 L1337.1 629.9 L1355.2 630.5 L1378.0 629.3 L1378 775 L833 775 Z" fill="#fdf5f0"/><path d="M833.0 721.3 L870.8 721.9 L925.3 721.0 L931.4 721.9 L985.9 721.6 L991.9 722.2 L1049.5 719.8 L1058.5 721.0 L1091.8 721.3 L1167.5 721.0 L1172.1 722.2 L1288.6 721.3 L1291.7 722.2 L1300.7 721.3 L1306.8 722.2 L1378.0 721.0 L1378 775 L833 775 Z" fill="#f2efe8"/><line x1="833" x2="1378" y1="613.3" y2="613.3" stroke="#e6e6e6" stroke-width="1.3"/><line x1="833" x2="1378" y1="667.3" y2="667.3" stroke="#e6e6e6" stroke-width="1.3"/><line x1="833" x2="1378" y1="721.3" y2="721.3" stroke="#e6e6e6" stroke-width="1.3"/><line x1="846.4" x2="846.4" y1="589" y2="775" stroke="#e3e3e3" stroke-width="1.3"/><line x1="981.9" x2="981.9" y1="589" y2="775" stroke="#e3e3e3" stroke-width="1.3"/><line x1="1118.5" x2="1118.5" y1="589" y2="775" stroke="#e3e3e3" stroke-width="1.3"/><line x1="1255.3" x2="1255.3" y1="589" y2="775" stroke="#e3e3e3" stroke-width="1.3"/><path d="M833.0 629.6 L843.6 627.5 L854.2 630.5 L867.8 631.7 L879.9 630.5 L898.1 632.6 L910.2 628.1 L920.8 627.5 L937.4 632.6 L949.5 630.5 L964.7 628.7 L976.8 631.1 L991.9 630.5 L998.0 632.0 L1010.1 630.5 L1022.2 632.0 L1034.3 626.0 L1049.5 626.0 L1058.5 629.6 L1070.6 631.4 L1082.8 630.2 L1103.9 630.8 L1122.1 631.1 L1128.2 633.2 L1135.7 631.1 L1149.4 631.1 L1161.5 629.0 L1176.6 632.0 L1203.9 633.5 L1209.9 631.7 L1234.1 631.7 L1246.2 631.1 L1264.4 632.3 L1273.5 629.0 L1282.6 631.7 L1294.7 630.2 L1312.8 632.9 L1321.9 633.5 L1337.1 629.9 L1355.2 630.5 L1378.0 629.3" fill="none" stroke="#f5822a" stroke-width="2"/><path d="M833.0 721.3 L870.8 721.9 L925.3 721.0 L931.4 721.9 L985.9 721.6 L991.9 722.2 L1049.5 719.8 L1058.5 721.0 L1091.8 721.3 L1167.5 721.0 L1172.1 722.2 L1288.6 721.3 L1291.7 722.2 L1300.7 721.3 L1306.8 722.2 L1378.0 721.0" fill="none" stroke="#2ca02c" stroke-width="2"/><line x1="833" x2="1378" y1="775" y2="775" stroke="#444" stroke-width="1.8"/></svg>
<div class="t" style="left:231px;width:600px;text-align:right;top:605px;font-size:17.8px;color:#444;">600</div>
<div class="t" style="left:231px;width:600px;text-align:right;top:659px;font-size:17.8px;color:#444;">400</div>
<div class="t" style="left:231px;width:600px;text-align:right;top:713px;font-size:17.8px;color:#444;">200</div>
<div class="t" style="left:231px;width:600px;text-align:right;top:765px;font-size:17.8px;color:#444;">0</div>
<div class="t" style="left:546.4px;width:600px;text-align:center;top:780px;font-size:17.5px;color:#444;">10:15</div>
<div class="t" style="left:681.9px;width:600px;text-align:center;top:780px;font-size:17.5px;color:#444;">10:30</div>
<div class="t" style="left:818.5px;width:600px;text-align:center;top:780px;font-size:17.5px;color:#444;">10:45</div>
<div class="t" style="left:955.3px;width:600px;text-align:center;top:780px;font-size:17.5px;color:#444;">11:00</div>
<svg class="abs" style="left:975.3px;top:546.5px" width="17.4" height="17.4" viewBox="0 0 512 512"><path d="M440.65 12.57l4 82.77A247.16 247.16 0 0 0 255.83 8C134.73 8 33.91 94.92 12.290 209.82A12 12 0 0 0 24.090 224h49.05a12 12 0 0 0 11.67-9.26 175.91 175.91 0 0 1 317-56.94l-101.46-4.86a12 12 0 0 0-12.57 12v47.41a12 12 0 0 0 12 12H500a12 12 0 0 0 12-12V12a12 12 0 0 0-12-12h-47.37a12 12 0 0 0-11.98 12.57zM255.83 432a175.61 175.61 0 0 1-146-77.8l101.8 4.87a12 12 0 0 0 12.57-12v-47.4a12 12 0 0 0-12-12H12a12 12 0 0 0-12 12V500a12 12 0 0 0 12 12h47.35a12 12 0 0 0 12-12.6l-4.150-82.57A247.17 247.17 0 0 0 255.83 504c121.11 0 221.93-86.92 243.55-201.82a12 12 0 0 0-11.8-14.18h-49.05a12 12 0 0 0-11.67 9.26A175.86 175.86 0 0 1 255.83 432z" fill="#bcbcbc"/></svg>
<div class="abs" style="left:1190.2px;top:546.3px;width:20px;height:20px;border-radius:50%;background:#f5822a"></div><div class="t" style="left:1216.5px;top:547px;font-size:19.0px;color:#333;">Read</div><div class="abs" style="left:1278.6px;top:546.3px;width:20px;height:20px;border-radius:50%;background:#2ca02c"></div><div class="t" style="left:1304.3px;top:547px;font-size:19.2px;color:#333;">Write</div>
<svg class="abs" style="left:790px;top:900px" width="588" height="210" viewBox="790 900 588 210"><path d="M833.0 940.2 L846.6 940.5 L854.2 938.1 L876.9 938.4 L882.9 936.9 L889.0 937.8 L898.1 936.9 L907.2 939.6 L919.3 940.5 L928.3 940.5 L931.4 939.0 L949.5 939.0 L961.7 940.2 L976.8 940.2 L991.9 938.7 L1010.1 939.3 L1019.2 938.1 L1025.2 938.7 L1034.3 942.3 L1046.4 943.5 L1055.5 942.0 L1070.6 941.1 L1082.8 941.7 L1097.9 941.7 L1119.1 941.1 L1143.3 941.1 L1173.6 941.1 L1203.9 941.1 L1234.1 941.1 L1276.5 940.2 L1300.7 940.8 L1309.8 939.0 L1325.0 939.0 L1349.2 939.9 L1361.3 942.3 L1367.3 941.4 L1378.0 941.7 L1378 1085.8 L833 1085.8 Z" fill="#f2f7f1"/><line x1="833" x2="1378" y1="932" y2="932" stroke="#e6e6e6" stroke-width="1.3"/><line x1="833" x2="1378" y1="970.5" y2="970.5" stroke="#e6e6e6" stroke-width="1.3"/><line x1="833" x2="1378" y1="1009.2" y2="1009.2" stroke="#e6e6e6" stroke-width="1.3"/><line x1="833" x2="1378" y1="1047" y2="1047" stroke="#e6e6e6" stroke-width="1.3"/><line x1="846.4" x2="846.4" y1="900" y2="1085.8" stroke="#e3e3e3" stroke-width="1.3"/><line x1="981.9" x2="981.9" y1="900" y2="1085.8" stroke="#e3e3e3" stroke-width="1.3"/><line x1="1118.5" x2="1118.5" y1="900" y2="1085.8" stroke="#e3e3e3" stroke-width="1.3"/><line x1="1255.3" x2="1255.3" y1="900" y2="1085.8" stroke="#e3e3e3" stroke-width="1.3"/><path d="M833.0 940.2 L846.6 940.5 L854.2 938.1 L876.9 938.4 L882.9 936.9 L889.0 937.8 L898.1 936.9 L907.2 939.6 L919.3 940.5 L928.3 940.5 L931.4 939.0 L949.5 939.0 L961.7 940.2 L976.8 940.2 L991.9 938.7 L1010.1 939.3 L1019.2 938.1 L1025.2 938.7 L1034.3 942.3 L1046.4 943.5 L1055.5 942.0 L1070.6 941.1 L1082.8 941.7 L1097.9 941.7 L1119.1 941.1 L1143.3 941.1 L1173.6 941.1 L1203.9 941.1 L1234.1 941.1 L1276.5 940.2 L1300.7 940.8 L1309.8 939.0 L1325.0 939.0 L1349.2 939.9 L1361.3 942.3 L1367.3 941.4 L1378.0 941.7" fill="none" stroke="#2ca02c" stroke-width="2"/><line x1="833" x2="1378" y1="1085.8" y2="1085.8" stroke="#f5822a" stroke-width="2"/></svg>
<div class="t" style="left:231px;width:600px;text-align:right;top:923px;font-size:17.8px;color:#444;">80k</div>
<div class="t" style="left:231px;width:600px;text-align:right;top:962px;font-size:17.8px;color:#444;">60k</div>
<div class="t" style="left:231px;width:600px;text-align:right;top:1001px;font-size:17.8px;color:#444;">40k</div>
<div class="t" style="left:231px;width:600px;text-align:right;top:1038px;font-size:17.8px;color:#444;">20k</div>
<div class="t" style="left:231px;width:600px;text-align:right;top:1076px;font-size:17.8px;color:#444;">0</div>
<div class="t" style="left:546.4px;width:600px;text-align:center;top:1091px;font-size:17.5px;color:#444;">10:15</div>
<div class="t" style="left:681.9px;width:600px;text-align:center;top:1091px;font-size:17.5px;color:#444;">10:30</div>
<div class="t" style="left:818.5px;width:600px;text-align:center;top:1091px;font-size:17.5px;color:#444;">10:45</div>
<div class="t" style="left:955.3px;width:600px;text-align:center;top:1091px;font-size:17.5px;color:#444;">11:00</div>
<svg class="abs" style="left:1035.3px;top:858px" width="17.4" height="17.4" viewBox="0 0 512 512"><path d="M440.65 12.57l4 82.77A247.16 247.16 0 0 0 255.83 8C134.73 8 33.91 94.92 12.290 209.82A12 12 0 0 0 24.090 224h49.05a12 12 0 0 0 11.67-9.26 175.91 175.91 0 0 1 317-56.94l-101.46-4.86a12 12 0 0 0-12.57 12v47.41a12 12 0 0 0 12 12H500a12 12 0 0 0 12-12V12a12 12 0 0 0-12-12h-47.37a12 12 0 0 0-11.98 12.57zM255.83 432a175.61 175.61 0 0 1-146-77.8l101.8 4.87a12 12 0 0 0 12.57-12v-47.4a12 12 0 0 0-12-12H12a12 12 0 0 0-12 12V500a12 12 0 0 0 12 12h47.35a12 12 0 0 0 12-12.6l-4.150-82.57A247.17 247.17 0 0 0 255.83 504c121.11 0 221.93-86.92 243.55-201.82a12 12 0 0 0-11.8-14.18h-49.05a12 12 0 0 0-11.67 9.26A175.86 175.86 0 0 1 255.83 432z" fill="#bcbcbc"/></svg>
<div class="abs" style="left:1190.2px;top:857.5px;width:20px;height:20px;border-radius:50%;background:#f5822a"></div><div class="t" style="left:1216.5px;top:858px;font-size:19.0px;color:#333;">Read</div><div class="abs" style="left:1278.6px;top:857.5px;width:20px;height:20px;border-radius:50%;background:#2ca02c"></div><div class="t" style="left:1304.3px;top:858px;font-size:19.2px;color:#333;">Write</div>
<div class="abs" style="left:1222px;top:924.5px;width:53px;height:34px;background:rgba(255,255,255,0.85)"></div>
<div class="t" style="left:1227.5px;top:933px;font-size:18.3px;color:#2ca02c;">Write</div>
<svg class="abs" style="left:1118px;top:926px" width="106" height="31" viewBox="1118 926 106 31"><path d="M1119.7 941.5 L1127.6 933.5 L1127.6 927.5 L1222 927.5 L1222 955.6 L1127.6 955.6 L1127.6 949.5 Z" fill="#2ca02c"/></svg>
<div class="t" style="left:1130.5px;top:933px;font-size:18.6px;color:#fff;">75.04487k</div>
<div class="abs" style="left:1213px;top:1069px;width:53px;height:25px;background:rgba(255,255,255,0.85)"></div>
<div class="t" style="left:1217px;top:1077px;font-size:18.3px;color:#f5822a;">Read</div>
<svg class="abs" style="left:1117px;top:1068px" width="98" height="34" viewBox="1117 1068 98 34"><path d="M1119 1085 L1126.7 1077 L1126.7 1069.8 L1212.3 1069.8 L1212.3 1100 L1126.7 1100 L1126.7 1093 Z" fill="#f5822a" stroke="#555" stroke-width="1"/></svg>
<div class="t" style="left:1132px;top:1077px;font-size:18.2px;color:#333;">119.5424</div>
<div class="t" style="left:1909.5px;top:547px;font-size:20.6px;color:#ef5824;">Details</div>
<div class="t" style="left:1909.5px;top:858px;font-size:20.6px;color:#ef5824;">Details</div>
<div class="t" style="left:1442.5px;top:609px;font-size:46.0px;color:#2e3878;-webkit-text-stroke:1.1px #2e3878;transform:scaleY(1.065);transform-origin:0 39px;">5</div>
<div class="t" style="left:1483px;top:631px;font-size:20.5px;color:#2e3878;">GB used</div>
<div class="t" style="left:1443px;top:679px;font-size:20.0px;color:#8b8f9c;">2994 GB free out of 2999 GB</div>
<div class="abs" style="left:1442px;top:717.3px;width:532.4px;height:43.3px;background:#e5e5ea;border-radius:8px;overflow:hidden"><div class="abs" style="left:0;top:0;width:3px;height:44px;background:#28a745"></div></div>
<div class="abs" style="left:1456.3px;top:727.7px;width:55px;height:22.8px;background:#c4c4c8;border-radius:3px"></div>
<div class="t" style="left:1461px;top:730px;font-size:19.0px;font-weight:bold;color:#fff;">0.2%</div>
<div class="t" style="left:1230.9px;width:600px;text-align:center;top:960px;font-size:50.0px;color:#2e3878;-webkit-text-stroke:0.8px #2e3878;">0</div>
<div class="t" style="left:1230.9px;width:600px;text-align:center;top:1021px;font-size:19.0px;color:#333;">YSQL</div>
<div class="t" style="left:1407.8px;width:600px;text-align:center;top:960px;font-size:50.0px;color:#2e3878;-webkit-text-stroke:0.8px #2e3878;">1</div>
<div class="t" style="left:1407.8px;width:600px;text-align:center;top:1021px;font-size:19.2px;color:#333;">YCQL</div>
<div class="t" style="left:1585.6px;width:600px;text-align:center;top:960px;font-size:50.0px;color:#2e3878;-webkit-text-stroke:0.8px #2e3878;">0</div>
<div class="t" style="left:1585.6px;width:600px;text-align:center;top:1022px;font-size:18.5px;color:#333;">YEDIS</div>
<svg class="abs" style="left:150px;top:1322px" width="60" height="50" viewBox="150 1322 60 50">
<circle cx="181.2" cy="1347.7" r="17.6" fill="none" stroke="#a9abb8" stroke-width="1.4"/>
<path d="M158.5 1364.5 C154 1366 156 1360 165 1355 L187 1343" fill="none" stroke="#a9abb8" stroke-width="1.3"/>
<path d="M166 1361.5 C160 1364.5 158 1365 158.5 1364.5" fill="none" stroke="#a9abb8" stroke-width="1.3"/>
<path d="M188.5 1336 L193 1334 L198 1331.5 L205 1330.5 L204.5 1335 L201.5 1339 L198.5 1345.5 L194.5 1344 L190 1340 Z" fill="#a9abb8"/>
</svg>
<div class="t" style="left:218.5px;top:1332px;font-size:26.4px;font-weight:bold;color:#a9abb8;">yugabyte</div>
<div class="t" style="left:335.5px;top:1334px;font-size:24.5px;font-weight:bold;color:#a9abb8;">DB</div>
<div class="t" style="left:407.5px;top:1338px;font-size:19.7px;color:#333;">Version: 2.6.2.0-b6</div>
<div class="abs" style="left:775.4px;top:1325.5px;width:225.0px;height:42.5px;border:1.3px solid #cdcdd2;border-radius:7px;background:#fff"></div>
<div class="abs" style="left:1023px;top:1325.5px;width:228.79999999999995px;height:42.5px;border:1.3px solid #cdcdd2;border-radius:7px;background:#fff"></div>
<div class="abs" style="left:1274.6px;top:1325.5px;width:309.60000000000014px;height:42.5px;border:1.3px solid #cdcdd2;border-radius:7px;background:#fff"></div>
<div class="t" style="left:798.5px;top:1338px;font-size:19.2px;color:#2b3152;">Join us on</div>
<svg class="abs" style="left:889px;top:1333px" width="25" height="25" viewBox="0 0 25 25">
<g stroke-linecap="round" stroke-width="4.2" fill="none">
<path d="M6 8.4 L11 8.4" stroke="#36c5f0"/><path d="M11 5 L11 5.6" stroke="#36c5f0"/>
<path d="M16.3 4.2 L16.3 9" stroke="#2eb67d"/><path d="M20 8.4 L20.4 8.4" stroke="#2eb67d"/>
<path d="M16.8 14 L21.5 14" stroke="#ecb22e"/><path d="M16.3 18.5 L16.3 19" stroke="#ecb22e"/>
<path d="M11 14.3 L11 19.5" stroke="#e01e5a"/><path d="M5.8 14 L6.2 14" stroke="#e01e5a"/>
</g></svg>
<div class="t" style="left:916.5px;top:1334px;font-size:23.5px;font-weight:bold;color:#000;letter-spacing:-0.3px;">slack</div>
<div class="t" style="left:1045.5px;top:1338px;font-size:19.2px;color:#2b3152;">Star us on</div>
<svg class="abs" style="left:1136px;top:1331px" width="28" height="28" viewBox="0 0 16 16" preserveAspectRatio="none"><path fill="#1b1b1b" d="M8 0C3.58 0 0 3.58 0 8c0 3.54 2.29 6.53 5.47 7.59.4.07.55-.17.55-.38 0-.19-.01-.82-.01-1.49-2.01.37-2.53-.49-2.69-.94-.09-.23-.48-.94-.82-1.13-.28-.15-.68-.52-.01-.53.63-.01 1.08.58 1.23.82.72 1.21 1.87.87 2.33.66.07-.52.28-.87.51-1.07-1.78-.2-3.640-.89-3.64-3.95 0-.87.31-1.590.82-2.15-.08-.2-.36-1.02.08-2.12 0 0 .67-.21 2.2.82.64-.18 1.32-.27 2-.27.68 0 1.36.09 2 .27 1.53-1.04 2.2-.82 2.2-.82.44 1.1.16 1.92.08 2.12.51.56.82 1.27.82 2.15 0 3.07-1.87 3.75-3.65 3.95.29.25.54.73.54 1.48 0 1.07-.01 1.93-.01 2.2 0 .21.15.46.55.38A8.013 8.013 0 0016 8c0-4.42-3.58-8-8-8z"/></svg>
<div class="t" style="left:1168.5px;top:1338px;font-size:19.2px;font-weight:bold;color:#1b2a5b;">GitHub</div>
<div class="t" style="left:1297px;top:1337px;font-size:20.1px;color:#2b3152;">Free t-shirt at</div>
<svg class="abs" style="left:1418px;top:1330px" width="40" height="32" viewBox="1418 1330 40 32">
<circle cx="1437.9" cy="1345.7" r="12" fill="#3b2f78"/>
<path d="M1430 1339 C1433 1336 1437 1335 1440 1337 C1439 1340 1436 1341 1435 1344 C1433 1346 1431 1344 1430 1339Z" fill="#6b60a3"/>
<path d="M1437 1349 C1440 1348 1442 1350 1441 1353 C1439 1355 1438 1356 1437 1355 Z" fill="#6b60a3"/>
<path d="M1422 1357 C1419 1357 1423 1352 1428 1350 L1442.3 1344" fill="none" stroke="#f26a3d" stroke-width="1.1"/>
<path d="M1442 1337 L1447 1334.5 L1454 1333.5 L1453.5 1337.5 L1451 1340.5 L1448.6 1344 L1444.5 1341.5 Z" fill="#f47a50"/>
</svg>
<div class="t" style="left:1462.5px;top:1336px;font-size:17.9px;font-weight:bold;color:#3a2f73;">yugabyte</div>
<div class="t" style="left:1541.5px;top:1337px;font-size:16.8px;font-weight:bold;color:#f26a3d;">DB</div>
<div class="t" style="left:1807.5px;top:1338px;font-size:19.75px;color:#333;">© 2021 Yugabyte, Inc.</div>
<svg class="abs" style="left:700px;top:542px" width="28" height="28" viewBox="0 0 28 28"><g fill="#8b8f9c"><path d="M26 2.5 L26 12 L22.5 8.5 L18 13 L15.5 10.5 L20 6 L16.5 2.5 Z"/><path d="M2.5 26 L2.5 16.5 L6 20 L10.5 15.5 L13 18 L8.5 22.5 L12 26 Z"/></g></svg>
<svg width="0" height="0" style="position:absolute"><defs><filter id="blur"><feGaussianBlur stdDeviation="2"/></filter></defs></svg>
<svg class="abs" style="left:165px;top:589px" width="200" height="300" viewBox="165 589 200 300"><g stroke="#9b9b9b" stroke-width="3.3"><line x1="236" y1="800.6" x2="276" y2="815.8"/><line x1="222" y1="820.7" x2="276" y2="820.7"/></g></svg>
<svg class="abs" style="left:187.4px;top:757.7px" width="66.7" height="72" viewBox="187.4 757.7 66.7 72"><rect x="200.4" y="773.7" width="36.7" height="32" rx="4" fill="rgba(0,0,0,0.16)" filter="url(#blur)"/><path d="M191.4 767.0 L191.4 798.4000000000001 A18.35 5.3 0 0 0 228.10000000000002 798.4000000000001 L228.10000000000002 767.0 A18.35 5.3 0 0 0 191.4 767.0Z" fill="#f15a22" stroke="#1d2350" stroke-width="2.0"/><ellipse cx="209.75" cy="767.0" rx="18.35" ry="5.3" fill="#f15a22" stroke="#1d2350" stroke-width="2.0"/><path d="M191.4 777.47 A18.35 5.3 0 0 0 228.10000000000002 777.47" fill="none" stroke="#1d2350" stroke-width="2.0"/><path d="M191.4 787.93 A18.35 5.3 0 0 0 228.10000000000002 787.93" fill="none" stroke="#1d2350" stroke-width="2.0"/></svg>
<svg class="abs" style="left:181.2px;top:790.5px" width="66.7" height="72.2" viewBox="181.2 790.5 66.7 72.2"><rect x="194.2" y="806.5" width="36.7" height="32.2" rx="4" fill="rgba(0,0,0,0.16)" filter="url(#blur)"/><path d="M185.2 799.8 L185.2 831.4000000000001 A18.35 5.3 0 0 0 221.89999999999998 831.4000000000001 L221.89999999999998 799.8 A18.35 5.3 0 0 0 185.2 799.8Z" fill="#f15a22" stroke="#1d2350" stroke-width="2.0"/><ellipse cx="203.54999999999998" cy="799.8" rx="18.35" ry="5.3" fill="#f15a22" stroke="#1d2350" stroke-width="2.0"/><path d="M185.2 810.33 A18.35 5.3 0 0 0 221.89999999999998 810.33" fill="none" stroke="#1d2350" stroke-width="2.0"/><path d="M185.2 820.87 A18.35 5.3 0 0 0 221.89999999999998 820.87" fill="none" stroke="#1d2350" stroke-width="2.0"/></svg>
<svg class="abs" style="left:268.3px;top:789.4px" width="66.7" height="73.3" viewBox="268.3 789.4 66.7 73.3"><rect x="281.3" y="805.4" width="36.7" height="33.3" rx="4" fill="rgba(0,0,0,0.16)" filter="url(#blur)"/><path d="M272.3 798.6999999999999 L272.3 831.4 A18.35 5.3 0 0 0 309.0 831.4 L309.0 798.6999999999999 A18.35 5.3 0 0 0 272.3 798.6999999999999Z" fill="#f15a22" stroke="#1d2350" stroke-width="2.0"/><ellipse cx="290.65000000000003" cy="798.6999999999999" rx="18.35" ry="5.3" fill="#f15a22" stroke="#1d2350" stroke-width="2.0"/><path d="M272.3 809.60 A18.35 5.3 0 0 0 309.0 809.60" fill="none" stroke="#1d2350" stroke-width="2.0"/><path d="M272.3 820.50 A18.35 5.3 0 0 0 309.0 820.50" fill="none" stroke="#1d2350" stroke-width="2.0"/></svg>
<svg class="abs" style="left:216.1px;top:787.1px" width="24" height="24" viewBox="216.1 787.1 24 24"><circle cx="228.1" cy="799.1" r="11" fill="#1d2350"/><path d="M223.1 799.6 L226.6 803.1 L233.1 794.6" fill="none" stroke="#fff" stroke-width="2.8" stroke-linecap="round" stroke-linejoin="round"/></svg>
<svg class="abs" style="left:209.8px;top:818.3px" width="24" height="24" viewBox="209.8 818.3 24 24"><circle cx="221.8" cy="830.3" r="11" fill="#1d2350"/><path d="M216.8 830.8 L220.3 834.3 L226.8 825.8" fill="none" stroke="#fff" stroke-width="2.8" stroke-linecap="round" stroke-linejoin="round"/></svg>
<svg class="abs" style="left:296px;top:818.3px" width="24" height="24" viewBox="296 818.3 24 24"><circle cx="308" cy="830.3" r="11" fill="#1d2350"/><path d="M303 830.8 L306.5 834.3 L313 825.8" fill="none" stroke="#fff" stroke-width="2.8" stroke-linecap="round" stroke-linejoin="round"/></svg>
<div class="abs" style="left:179.4px;top:879.7px;width:561px;height:215px;background:rgba(251,251,251,0.78);border-radius:10px"></div>
<div class="t" style="left:201.5px;top:901px;font-size:26.3px;font-weight:bold;color:#333;">Data Placement (In AZs)</div>
<svg class="abs" style="left:191.4px;top:940.2px" width="60.5" height="71" viewBox="191.4 940.2 60.5 71"><rect x="204.4" y="956.2" width="30.5" height="31" rx="4" fill="rgba(0,0,0,0.16)" filter="url(#blur)"/><path d="M195.4 948.8000000000001 L195.4 980.6 A15.25 4.6 0 0 0 225.9 980.6 L225.9 948.8000000000001 A15.25 4.6 0 0 0 195.4 948.8000000000001Z" fill="#f15a22" stroke="#1d2350" stroke-width="1.8"/><ellipse cx="210.65" cy="948.8000000000001" rx="15.25" ry="4.6" fill="#f15a22" stroke="#1d2350" stroke-width="1.8"/><path d="M195.4 959.40 A15.25 4.6 0 0 0 225.9 959.40" fill="none" stroke="#1d2350" stroke-width="1.8"/><path d="M195.4 970.00 A15.25 4.6 0 0 0 225.9 970.00" fill="none" stroke="#1d2350" stroke-width="1.8"/></svg>
<svg class="abs" style="left:214.0px;top:964.0px" width="23.0" height="23.0" viewBox="214.0 964.0 23.0 23.0"><circle cx="225.5" cy="975.5" r="10.5" fill="#1d2350"/><path d="M220.5 976.0 L224.0 979.5 L230.5 971.0" fill="none" stroke="#fff" stroke-width="2.8" stroke-linecap="round" stroke-linejoin="round"/></svg>
<div class="t" style="left:253.5px;top:944px;font-size:23.2px;font-weight:bold;color:#333;">Primary Data</div>
<div class="abs" style="left:254.4px;top:975px;width:188.4px;height:22.8px;background:#4b5690;border-radius:3px"></div>
<div class="t" style="left:263px;top:980px;font-size:14.8px;font-weight:bold;color:#fff;">On-Premises Datacenter</div>
<div class="t" style="left:255px;top:1001px;font-size:19.5px;color:#333;">3 Regions, 3 AZS, 6 Nodes</div>
<svg class="abs" style="left:191.4px;top:1037px" width="60.5" height="71.5" viewBox="191.4 1037 60.5 71.5"><rect x="204.4" y="1053" width="30.5" height="31.5" rx="4" fill="rgba(0,0,0,0.16)" filter="url(#blur)"/><path d="M195.4 1045.6 L195.4 1077.9 A15.25 4.6 0 0 0 225.9 1077.9 L225.9 1045.6 A15.25 4.6 0 0 0 195.4 1045.6Z" fill="#5aa55a" stroke="#1d2350" stroke-width="1.8"/><ellipse cx="210.65" cy="1045.6" rx="15.25" ry="4.6" fill="#5aa55a" stroke="#1d2350" stroke-width="1.8"/><path d="M195.4 1056.37 A15.25 4.6 0 0 0 225.9 1056.37" fill="none" stroke="#1d2350" stroke-width="1.8"/><path d="M195.4 1067.13 A15.25 4.6 0 0 0 225.9 1067.13" fill="none" stroke="#1d2350" stroke-width="1.8"/></svg>
<svg class="abs" style="left:214px;top:1060px" width="23" height="23" viewBox="0 0 23 23"><circle cx="11.5" cy="11.5" r="10.5" fill="#1d2350"/><path d="M6 10 A5.5 5 0 0 1 16 8.5" fill="none" stroke="#fff" stroke-width="2"/><path d="M17.5 6 L17 11 L13 9.5Z" fill="#fff"/><path d="M17 13 A5.5 5 0 0 1 7 14.5" fill="none" stroke="#fff" stroke-width="2"/><path d="M5.5 17 L6 12 L10 13.5Z" fill="#fff"/></svg>
<div class="t" style="left:253.5px;top:1041px;font-size:23.2px;font-weight:bold;color:#333;">Read Replica</div>
<div class="t" style="left:255px;top:1071px;font-size:19.5px;color:#333;">None</div>
<div class="abs" style="left:362.8px;top:1086.5px;width:391.2px;height:21.5px;background:rgba(255,255,255,0.85);overflow:hidden"><div class="t" style="left:8px;top:3px;font-size:16.2px;font-weight:bold;color:#333"><span style="color:#0078a8">Leaflet</span> | Copyright © MapBox All rights reserved</div></div>
<svg class="abs" style="left:2030px;top:1355px" width="18" height="22" viewBox="2030 1355 18 22"><path d="M2046 1355 L2046 1364 A11 11 0 0 1 2038 1377 L2048 1377 L2048 1355 Z" fill="#505050"/><path d="M2046 1364 A11 11 0 0 1 2038 1377" fill="none" stroke="#111" stroke-width="1"/></svg>
</body></html>
